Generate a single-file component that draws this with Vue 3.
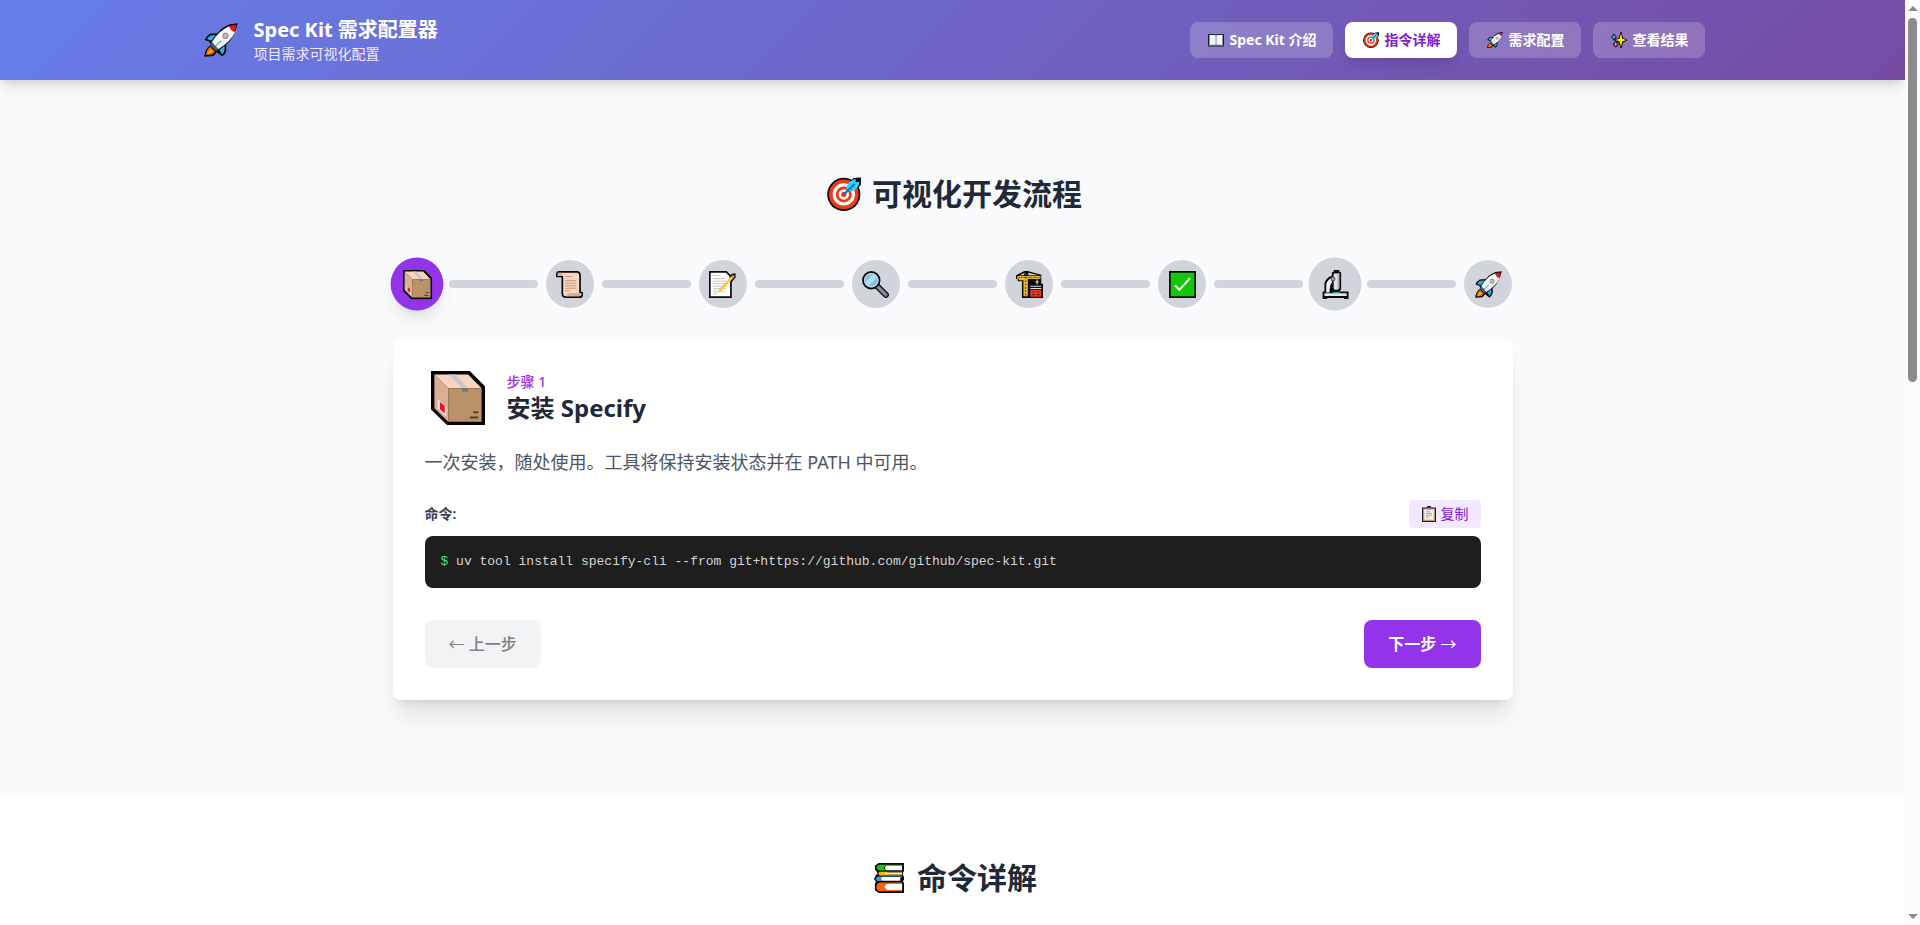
<script setup>
import { ref } from 'vue'

const tabs = [
  { icon: 'book', label: 'Spec Kit 介绍' },
  { icon: 'target', label: '指令详解' },
  { icon: 'rocket', label: '需求配置' },
  { icon: 'sparkles', label: '查看结果' },
]
const activeTab = ref(1)

const steps = ['box', 'scroll', 'memo', 'lens', 'crane', 'check', 'scope', 'rocket']
const current = ref(0)
const raised = ref(6)

const command = 'uv tool install specify-cli --from git+https://github.com/github/spec-kit.git'
function copy() {
  navigator.clipboard?.writeText(command)
}
</script>

<template>
  <div class="shell">
    <svg class="defs" aria-hidden="true">
      <symbol id="rocket" viewBox="0 0 32 32">
        <path d="M31.8.2 24 1.2Q17 4 12.5 9.6L5.5 10Q2 12 .5 16L5 17.5 6.5 20.5Q1 24 .2 31.8L9 31 12 27.5 17.3 31.6Q20.5 29 21 26V20.5Q28.5 14 31.8.2Z" fill="#0b0b0b" />
        <path d="M11 11.4 6.4 11.7Q3.8 13 2.8 15L7 16.8ZM14.5 25.5 17.2 29.3Q19 27.5 19.3 25.5V21.5Z" fill="#28b2ef" />
        <path d="M24.5 2.8Q14 6.5 7.4 18.2L13.5 24.5Q25 18 29.6 7.8Z" fill="#fff" />
        <path d="M30.3 1.7 23.5 3Q25.2 7.4 29 8.8Q30 5 30.3 1.7Z" fill="#e81224" />
        <path d="M19 11.5 27.6 8.5Q23.5 17.5 13.5 24.5L11 22Z" fill="#f1f3f4" />
        <circle cx="20.2" cy="12" r="3" fill="#989898" /><circle cx="20.2" cy="12" r="1.8" fill="#bdbdbd" />
        <path d="M11 21.5 16 16.8" stroke="#28b2ef" stroke-width="1.2" />
        <path d="M7.2 18.2 13.6 24.5 11.6 26.6 5.8 21Z" fill="#535b61" />
        <path d="M5.8 22.2 10.2 26.8 8 29.4 1.9 30.1Q2.5 25 5.8 22.2Z" fill="#f7630c" />
        <path d="M6 24.8 8 26.5 5.8 28.7 3.4 29Z" fill="#ffb900" />
      </symbol>
      <symbol id="target" viewBox="0 0 32 32">
        <circle cx="15.8" cy="16.4" r="15.6" fill="#0b0b0b" />
        <path d="M18 8 25 1H28V.5H32V7L25 16Z" fill="#0b0b0b" />
        <circle cx="15.8" cy="16.4" r="14" fill="#f03a17" />
        <circle cx="15.8" cy="16.4" r="9" fill="none" stroke="#fff" stroke-width="3" />
        <circle cx="15.8" cy="16.4" r="3.7" fill="#f03a17" stroke="#fff" stroke-width="2.4" />
        <path d="M18.3 10.5Q18.5 5 25.5 2L27 2.2V5L30.5 4.5Q30 11 24 13.2L19.5 13.5Z" fill="#31d2f7" />
        <path d="M15.8 16.4 26 6.5" stroke="#0078d7" stroke-width="2" />
      </symbol>
      <symbol id="book" viewBox="0 0 32 32">
        <path d="M0 4H14L16 5.5 18 4H32V29H0Z" fill="#16242c" />
        <path d="M2 24H30V27.5H2Z" fill="#4b8096" />
        <path d="M3 5.8H13.5L15.6 7.2V25.5H3ZM16.6 7.2 18.6 5.8H29V25.5H16.6Z" fill="#f6f6f6" />
        <path d="M14.9 8V25M17.3 8V25" stroke="#c4c4c4" />
      </symbol>
      <symbol id="sparkles" viewBox="0 0 32 32">
        <path d="M20 0 23.4 12.2 32 16.2 23.4 20.4 20 32 16.4 20.4 8 16.2 16.4 12.2Z" fill="#0b0b0b" stroke="#0b0b0b" stroke-width="2" stroke-linejoin="round" />
        <path d="M6 3.5 11 10 6 17 1 10ZM9.5 18 15 24.5 9.5 31 4 24.5Z" fill="#0b0b0b" stroke="#0b0b0b" stroke-linejoin="round" />
        <path d="M20 2 22.4 13.2 30.8 16.2 22.4 19.2 20 30 17.4 19.2 9 16.2 17.4 13.2Z" fill="#fff100" />
        <path d="M6 4.5 7.4 8.6 10.5 10 7.4 11.4 6 15.5 4.6 11.4 1.2 10 4.6 8.6Z" fill="#31d2f7" />
        <path d="M9.5 19 10.9 23.1 14 24.5 10.9 25.9 9.5 30 8.1 25.9 5 24.5 8.1 23.1Z" fill="#ff8f9c" />
      </symbol>
      <symbol id="box" viewBox="0 0 32 32">
        <path d="M0 0H23L32 9V32H9.5L0 22.8Z" fill="#050505" />
        <path d="M2 2 10.2 10.2V30L2 22Z" fill="#d9ae92" />
        <path d="M2 2H22L30 10.2H10.2Z" fill="#f7d4c0" />
        <path d="M10.2 10.2H30V30H10.2Z" fill="#bb9167" />
        <path d="M10.5 2H14.5L22 10.2H18.3Z" fill="#c8c8c8" />
        <path d="M18.3 10.2H22V12.2H18.3Z" fill="#767676" />
        <path d="M4 16.8 9 21V27L4 22Z" fill="#eee" />
        <path d="M5.2 18.2 8.2 20.7V25.2L5.2 22.6Z" fill="#f2102a" />
        <path d="M25 24.5H28M23 27.6H28" stroke="#444" stroke-width="1.2" />
      </symbol>
      <symbol id="scroll" viewBox="0 0 32 32">
        <path d="M4 1H25Q28 1 28.5 5V25.5H31V28Q31 31 28 31H12Q7.5 31 7.5 27V6.5H1V4Q1 1 4 1Z" fill="#f7d5bf" stroke="#0b0b0b" stroke-width="2" stroke-linejoin="round" />
        <path d="M2 2H6L8 6H2Z" fill="#d9ae92" />
        <path d="M13.5 26H30V28L28 30H12Q14 29 13.5 26Z" fill="#d9ae92" />
        <path d="M11 6.5H19M11 11.5H24M11 14.5H23M11 17.5H24M11 20.5H24M11 23.5H16" stroke="#c69c78" stroke-width="1.2" />
      </symbol>
      <symbol id="memo" viewBox="0 0 32 32">
        <path d="M1 1H20.5L26 6.5V31H1Z" fill="#fff" stroke="#0b0b0b" stroke-width="2" />
        <path d="M4.5 5.5H13M4.5 9H19M4.5 12H21M4.5 15H21M4.5 18H21M4.5 21H20M4.5 24H19M4.5 27H9" stroke="#bdbdbd" stroke-width="1.1" />
        <path d="M24 6 28 3H31.5V7.5L26.5 14Z" fill="#0b0b0b" />
        <path d="M12 23.5 27.5 7.5" stroke="#ffc83d" stroke-width="3.2" />
        <path d="M27 8 29.5 5.4" stroke="#e5848f" stroke-width="3" />
        <path d="M8.5 27 10.5 22.5 13 25Z" fill="#f7d5bf" />
      </symbol>
      <symbol id="lens" viewBox="0 0 32 32">
        <path d="M18 18 28.3 28.3" stroke="#0b0b0b" stroke-width="7.2" stroke-linecap="round" />
        <path d="M19 19 28.3 28.3" stroke="#6b7880" stroke-width="4.4" stroke-linecap="round" />
        <path d="M18 18 28 28" stroke="#a5adb2" stroke-width="1.2" />
        <circle cx="11" cy="11" r="9.8" fill="#83beec" stroke="#0b0b0b" stroke-width="2.2" />
        <circle cx="11" cy="11" r="8" fill="none" stroke="#d6e9f5" />
        <path d="M4.8 12.5 12.5 4.5Q16 5 17.5 8L8 17.5Q5 16 4.8 12.5Z" fill="#b9dcf4" />
      </symbol>
      <symbol id="crane" viewBox="0 0 32 32">
        <path d="M0 5 10 0H14L30 4.5V15H32V32H7V12H2V9.5H0Z" fill="#0b0b0b" />
        <path d="M4 5 10.5 2 9 5ZM14.5 2.2 27 5H14.5Z" fill="#d1d5db" />
        <path d="M1.5 5.8H29V9.5H14V30H8.8V11H3.5V9.5H1.5Z" fill="#e8b339" />
        <path d="M3 7.7H28" stroke="#443514" stroke-width="1.3" stroke-dasharray="1.5 1.5" />
        <path d="M11.4 3V30" stroke="#6d5214" stroke-width="1.5" stroke-dasharray="2 2" />
        <path d="M25 10V16M23 13H27M17 18.2H30M17 20.8H30" stroke="#dfe3e6" stroke-width="1.2" />
        <path d="M17 22.3H30V30.5H17Z" fill="#f03a17" />
        <path d="M19 25H22.5M24.5 25H28M19 28H22.5M24.5 28H28" stroke="#7d160c" stroke-width="1.2" />
      </symbol>
      <symbol id="check" viewBox="0 0 32 32">
        <path d="M1 1H31V31H1Z" fill="#16c60c" stroke="#0b0b0b" stroke-width="2" />
        <path d="M7 17 12.3 22.3 25 8.5" fill="none" stroke="#fff" stroke-width="2.4" />
      </symbol>
      <symbol id="scope" viewBox="0 0 32 32">
        <path d="M2 23.5H4V15Q5 9 12 6.5V3L14 2V0H20V2L22 3V21L20.5 23.5H30V31.5H25V30.5H7V31.5H2Z" fill="#0b0b0b" />
        <path d="M6 24.5V16Q7 11 12 9V14Q9.5 16 9.5 24.5Z" fill="#f0f1f2" />
        <path d="M14 4H20V20L18 21.5H15L14 20Z" fill="#e2e4e5" />
        <path d="M18 3.5H20V20L18 21.5Z" fill="#b4b8ba" />
        <circle cx="13.3" cy="10" r="2.2" fill="#a3a7aa" stroke="#4b4b4b" />
        <path d="M13 24.2H21V25.4H13Z" fill="#31d2f7" />
        <path d="M4 25.4H28V28.4H4Z" fill="#e2e4e5" />
      </symbol>
      <symbol id="clip" viewBox="0 0 32 32">
        <path d="M2 3H11L13 0H19L21 3H30V32H2Z" fill="#201a17" />
        <path d="M4 5H28V30H4Z" fill="#c39b72" />
        <path d="M6.5 6.5H25.5V27.5H6.5Z" fill="#f2f2f2" />
        <path d="M11 3.5H21V7.5H11Z" fill="#8b8f92" />
        <path d="M10 11.5H18M10 15H22M10 18.5H22M10 22H16" stroke="#8b8f92" stroke-width="1.5" />
      </symbol>
      <symbol id="books" viewBox="0 0 32 32">
        <path d="M5 0H32V8.5L31 10V13L32 15V18L30.5 19.5 32 21V32H5L1 29V22L2 20 0 17 2 13 4 11 1 7V3Z" fill="#080808" />
        <path d="M5.5 1.8H30V3H13Q9 5 12 8H6Q2.5 7 2.8 4.5Q3 2 5.5 1.8Z" fill="#16c60c" />
        <path d="M13 3H30V7.8H13Q10.5 5.5 13 3Z" fill="#fff" />
        <path d="M6 9.3H30V10.2H14V12.3H30V13.2H6Q3.5 11.5 6 9.3Z" fill="#ffb900" />
        <path d="M12 10.3H30V12.2H12Z" fill="#fff1cf" />
        <path d="M5 14.5H30V15.5H10Q6 17 9 19.3H4.5Q1.5 18.5 2 16.5Q2.5 14.6 5 14.5Z" fill="#3a96dd" />
        <path d="M9 15H28V19H9Q6 17 9 15Z" fill="#fff" />
        <path d="M7 20.8H30V22H14Q9 25 14 28.7H30V30.2H7Q2.5 29.5 2.5 25.5Q2.5 21.3 7 20.8Z" fill="#f7630c" />
        <path d="M14 22H30V28.7H14Q8.5 25 14 22Z" fill="#fff" />
      </symbol>
    </svg>

    <div class="page">
      <header class="topbar">
        <div class="topbar-inner">
          <div class="brand">
            <span class="brand-icon"><svg class="glyph lg"><use href="#rocket" /></svg></span>
            <div>
              <h1>Spec Kit 需求配置器</h1>
              <p>项目需求可视化配置</p>
            </div>
          </div>
          <nav class="tabs">
            <button
              v-for="(tab, i) in tabs"
              :key="tab.label"
              type="button"
              class="tab"
              :class="{ active: i === activeTab }"
              @click="activeTab = i"
            >
              <span class="tab-icon"><svg class="glyph sm"><use :href="'#' + tab.icon" /></svg></span>
              {{ tab.label }}
            </button>
          </nav>
        </div>
      </header>

      <section class="flow">
        <div class="container">
          <h2><span class="h-icon"><svg class="glyph lg"><use href="#target" /></svg></span>可视化开发流程</h2>

          <div class="steps">
            <template v-for="(step, i) in steps" :key="step + i">
              <span v-if="i > 0" class="link"></span>
              <button
                type="button"
                class="step"
                :class="{ active: i === current, raised: i === raised }"
                @click="current = i"
              >
                <svg class="glyph md"><use :href="'#' + step" /></svg>
              </button>
            </template>
          </div>

          <article class="card">
            <div class="card-head">
              <span class="card-icon"><svg class="glyph xl"><use href="#box" /></svg></span>
              <div>
                <div class="step-no">步骤 1</div>
                <h3>安装 Specify</h3>
              </div>
            </div>
            <p class="desc">一次安装，随处使用。工具将保持安装状态并在 PATH 中可用。</p>
            <div class="cmd-head">
              <span class="cmd-label">命令:</span>
              <button type="button" class="copy" @click="copy">
                <svg class="glyph sm"><use href="#clip" /></svg>复制
              </button>
            </div>
            <pre class="cmd"><span class="prompt">$</span> {{ command }}</pre>
            <div class="actions">
              <button type="button" class="btn prev" disabled><span class="arrow">←</span> 上一步</button>
              <button type="button" class="btn next">下一步 <span class="arrow">→</span></button>
            </div>
          </article>
        </div>
      </section>

      <section class="commands">
        <h2><span class="h-icon"><svg class="glyph stack"><use href="#books" /></svg></span>命令详解</h2>
      </section>
    </div>

    <div class="scrollbar" aria-hidden="true">
      <span class="up"></span>
      <div class="track"><div class="thumb"></div></div>
      <span class="down"></span>
    </div>
  </div>
</template>

<style>
body {
  margin: 0;
}
</style>

<style scoped>
.shell {
  display: flex;
  height: 100vh;
  overflow: hidden;
  background: #fff;
  color: #1f2937;
  font-family: "Noto Sans", "Noto Sans CJK SC", sans-serif;
  font-size: 16px;
  line-height: 24px;
}
.defs {
  position: absolute;
  width: 0;
  height: 0;
}
h1, h2, h3, p, pre {
  margin: 0;
}
button {
  border: 0;
  font-family: inherit;
  cursor: pointer;
}
.glyph {
  display: block;
  flex: none;
}
.sm { width: 16px; height: 16px; }
.md { width: 27px; height: 27px; }
.stack { width: 30px; height: 30px; }
.lg { width: 34px; height: 34px; }
.xl { width: 54px; height: 54px; }

.page {
  flex: 1;
  min-width: 0;
  overflow: hidden;
}
.topbar {
  position: relative;
  z-index: 1;
  background: linear-gradient(135deg, #667eea 0%, #764ba2 100%);
  box-shadow: 0 10px 15px -3px rgba(0, 0, 0, 0.1), 0 4px 6px -2px rgba(0, 0, 0, 0.1);
}
.topbar-inner {
  display: flex;
  align-items: center;
  justify-content: space-between;
  box-sizing: border-box;
  max-width: 1536px;
  margin: 0 auto;
  padding: 16px;
}
.brand {
  display: flex;
  align-items: center;
  gap: 12px;
  color: #fff;
}
.brand-icon, .h-icon {
  display: flex;
  justify-content: center;
  width: 41px;
}
.brand h1 {
  font-size: 20px;
  line-height: 28px;
  font-weight: 700;
}
.brand p {
  font-size: 14px;
  line-height: 20px;
  color: #f3e8ff;
}
.tabs {
  display: flex;
  gap: 12px;
}
.tab {
  display: flex;
  align-items: center;
  gap: 4px;
  padding: 8px 16px;
  border-radius: 8px;
  background: rgba(255, 255, 255, 0.2);
  color: #fff;
  font-size: 14px;
  line-height: 20px;
  font-weight: 700;
}
.tab.active {
  background: #fff;
  color: #7e22ce;
  box-shadow: 0 10px 15px -3px rgba(0, 0, 0, 0.1), 0 4px 6px -4px rgba(0, 0, 0, 0.1);
}
.tab-icon {
  display: flex;
  justify-content: center;
  width: 20px;
}

.flow {
  padding: 96px 16px;
  background: #f9fafc;
}
.container {
  max-width: 1120px;
  margin: 0 auto;
}
h2 {
  display: flex;
  align-items: center;
  justify-content: center;
  gap: 8px;
  font-size: 30px;
  line-height: 36px;
  font-weight: 700;
}
.steps {
  display: flex;
  align-items: center;
  margin: 48px 0 32px;
}
.step {
  display: flex;
  align-items: center;
  justify-content: center;
  flex: none;
  width: 48px;
  height: 48px;
  padding: 0;
  border-radius: 50%;
  background: #d1d5db;
}
.step.active {
  background: #9333ea;
  box-shadow: 0 10px 15px -3px rgba(0, 0, 0, 0.1), 0 4px 6px -4px rgba(0, 0, 0, 0.1);
}
.step.active, .step.raised {
  transform: scale(1.1);
}
.link {
  flex: 1;
  height: 8px;
  margin: 0 8px;
  border-radius: 4px;
  background: #d1d5db;
}

.card {
  padding: 32px;
  border-radius: 8px;
  background: #fff;
  box-shadow: 0 20px 25px -5px rgba(0, 0, 0, 0.1), 0 8px 10px -6px rgba(0, 0, 0, 0.1);
}
.card-head {
  display: flex;
  align-items: center;
  gap: 16px;
  height: 52px;
}
.card-icon {
  display: flex;
  justify-content: center;
  width: 66px;
}
.step-no {
  font-size: 14px;
  line-height: 20px;
  font-weight: 500;
  color: #9333ea;
}
h3 {
  font-size: 24px;
  line-height: 32px;
  font-weight: 700;
}
.desc {
  margin: 24px 0;
  font-size: 18px;
  line-height: 28px;
  color: #4b5563;
}
.cmd-head {
  display: flex;
  align-items: center;
  justify-content: space-between;
  margin-bottom: 8px;
  font-size: 14px;
  line-height: 20px;
}
.cmd-label {
  font-weight: 600;
  color: #374151;
}
.copy {
  display: flex;
  align-items: center;
  gap: 4px;
  padding: 4px 12px;
  border-radius: 4px;
  background: #f3e8ff;
  color: #7e22ce;
  font-size: 14px;
  line-height: 20px;
}
.cmd {
  padding: 16px;
  border-radius: 8px;
  background: #1e1e1e;
  color: #d4d4d4;
  font-family: "Liberation Mono", monospace;
  font-size: 13px;
  line-height: 20px;
  overflow: hidden;
}
.prompt {
  color: #4ade80;
}
.actions {
  display: flex;
  justify-content: space-between;
  margin-top: 32px;
}
.btn {
  padding: 12px 24px;
  border-radius: 8px;
  font-size: 16px;
  line-height: 24px;
  font-weight: 600;
}
.arrow {
  font-family: "Noto Sans CJK SC", sans-serif;
  font-weight: 400;
  line-height: 1;
}
.prev {
  background: #f2f3f5;
  color: #808080;
  font-weight: 500;
  cursor: not-allowed;
}
.next {
  background: #9333ea;
  color: #fff;
}
.commands {
  padding: 64px 16px;
  background: #fff;
}

.scrollbar {
  display: flex;
  flex-direction: column;
  align-items: center;
  flex: none;
  box-sizing: border-box;
  width: 15px;
  padding: 6px 0;
  background: #fcfcfc;
}
.up, .down {
  width: 0;
  border: 5px solid transparent;
}
.up {
  border-top: 0;
  border-bottom-color: #8b8b8b;
}
.down {
  border-bottom: 0;
  border-top-color: #8b8b8b;
}
.track {
  flex: 1;
  width: 9px;
  margin: 7px 0;
}
.thumb {
  height: 41%;
  border-radius: 5px;
  background: #8b8b8b;
}
</style>
